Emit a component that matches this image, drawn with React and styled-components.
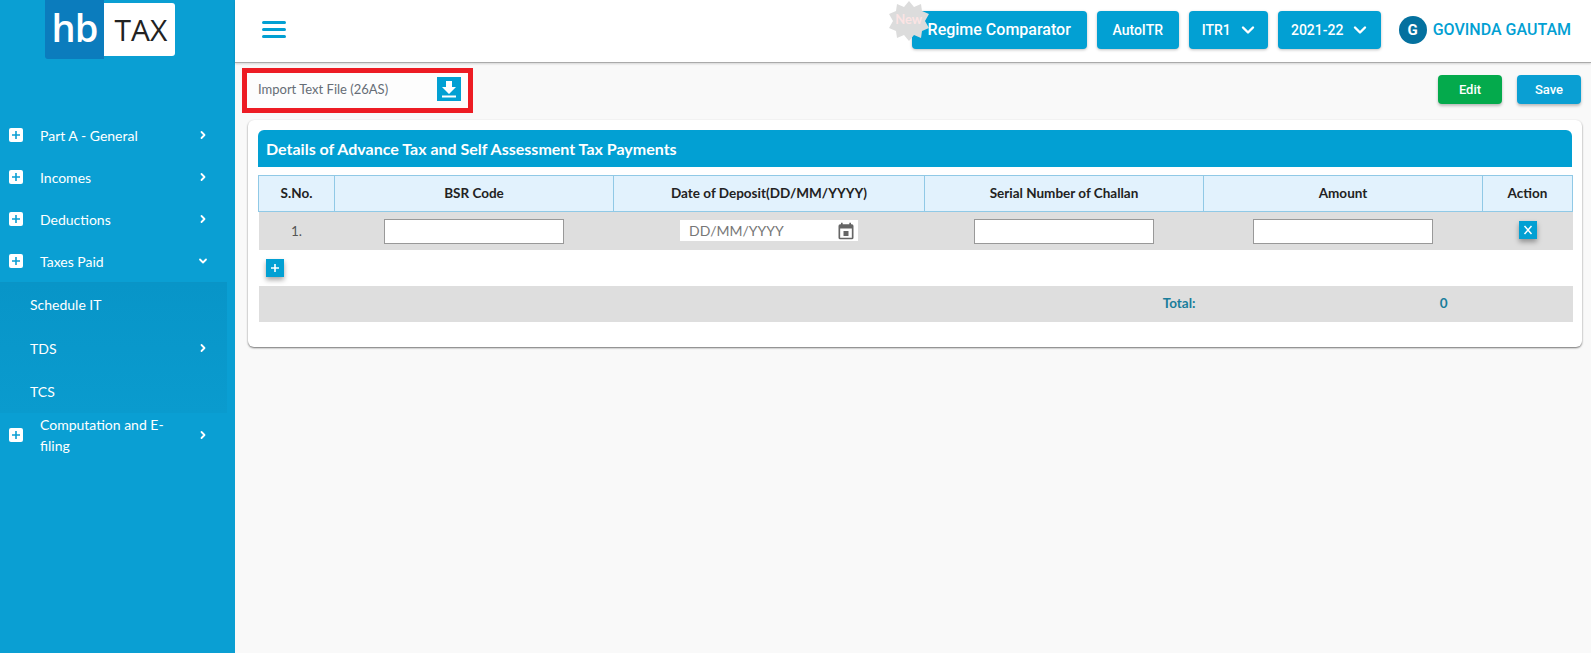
import React from "react";
import styled, { createGlobalStyle } from "styled-components";

const blue = "#02a0d3";

const GlobalStyle = createGlobalStyle`
  html, body {
    margin: 0;
    padding: 0;
    height: 100%;
    overflow: hidden;
    font-family: "Lato", "Liberation Sans", sans-serif;
  }
  * { box-sizing: border-box; }
`;

const Page = styled.div`
  display: flex;
  width: 1591px;
  height: 653px;
  background: #f9f9f9;
`;

const Sidebar = styled.aside`
  width: 235px;
  flex-shrink: 0;
  background: #0a9fd3;
  color: #fff;
`;

const LogoWrap = styled.div`
  display: flex;
  align-items: center;
  height: 114px;
  padding: 0 0 55px 45px;
`;

const LogoMark = styled.div`
  width: 59px;
  height: 59px;
  background: #0b7cbd;
  border-radius: 0 0 0 3px;
  color: #fff;
  font-family: "Open Sans", sans-serif;
  font-size: 38px;
  font-weight: 600;
  line-height: 54px;
  text-align: center;
  letter-spacing: -1px;
`;

const LogoWord = styled.div`
  width: 71px;
  height: 53px;
  padding-left: 3px;
  background: #fff;
  border-radius: 0 3px 3px 0;
  color: #222;
  font-family: "Open Sans", sans-serif;
  font-size: 30px;
  line-height: 53px;
  text-align: center;
`;

const MenuItem = styled.div`
  display: flex;
  align-items: center;
  height: ${(p) => p.$height || 42}px;
  padding: 0 27px 0 9px;
  font-size: 14px;
  line-height: 21px;
  ${(p) => p.$divider && "border-bottom: 1px solid #0a94c6; margin-right: 8px; padding-right: 19px;"}
`;

const PlusBox = styled.span`
  display: flex;
  align-items: center;
  justify-content: center;
  width: 14px;
  height: 14px;
  flex-shrink: 0;
  background: #fff;
  border-radius: 2px;
`;

const MenuLabel = styled.span`
  flex: 1;
  padding-left: 17px;
  padding-right: 20px;
`;

const SubMenu = styled.div`
  width: 227px;
  background: linear-gradient(#0895c8, #0a9bce);
`;

const SubItem = styled.div`
  display: flex;
  align-items: center;
  justify-content: space-between;
  height: 43.4px;
  padding: 0 19px 0 30px;
  font-size: 14px;
`;

const Main = styled.main`
  flex: 1;
  min-width: 0;
`;

const TopBar = styled.header`
  display: flex;
  align-items: center;
  justify-content: space-between;
  height: 63px;
  padding: 0 20px 3px 27px;
  background: #fff;
  border-bottom: 1px solid #aaa;
  box-shadow: 0 1px 2px rgba(0, 0, 0, 0.15);
`;

const Burger = styled.div`
  display: flex;
  flex-direction: column;
  gap: 4px;
  width: 24px;
  span {
    display: block;
    height: 3px;
    border-radius: 2px;
    background: ${blue};
  }
`;

const TopActions = styled.div`
  display: flex;
  align-items: center;
  gap: 10px;
`;

const TopButton = styled.div`
  position: relative;
  display: flex;
  align-items: center;
  justify-content: center;
  gap: 10px;
  width: ${(p) => p.$width}px;
  height: 38px;
  background: ${blue};
  border-radius: 4px;
  color: #fff;
  font-family: "Roboto", sans-serif;
  font-weight: 500;
  font-size: ${(p) => p.$size || 14}px;
  box-shadow: 0 1px 3px rgba(0, 0, 0, 0.25);
`;

const NewBadge = styled.div`
  position: absolute;
  left: -24px;
  top: -11px;
  width: 42px;
  height: 42px;
  svg {
    display: block;
  }
`;

const NewLabel = styled.span`
  position: absolute;
  left: 0;
  right: 0;
  top: 11px;
  color: #fbe4e4;
  font-family: "Lato", sans-serif;
  font-size: 13px;
  font-weight: 700;
  line-height: 16px;
  text-align: center;
`;

const User = styled.div`
  display: flex;
  align-items: center;
  gap: 6px;
  margin-left: 8px;
  color: ${blue};
  font-family: "Roboto", sans-serif;
  font-weight: 500;
  font-size: 16px;
`;

const Avatar = styled.span`
  display: flex;
  align-items: center;
  justify-content: center;
  width: 28px;
  height: 28px;
  border-radius: 50%;
  background: #04719f;
  color: #fff;
  font-weight: 700;
  font-size: 15px;
`;

const Toolbar = styled.div`
  display: flex;
  align-items: flex-start;
  justify-content: space-between;
  height: 57px;
  padding: 5px 10px 0 7px;
`;

const ImportBox = styled.div`
  display: flex;
  align-items: center;
  justify-content: space-between;
  width: 231px;
  height: 45px;
  padding: 0 7px 4px 11px;
  border: 5px solid #ed1c24;
  background: #fdfdfd;
  color: #666d76;
  font-size: 13px;
`;

const IconSquare = styled.span`
  display: flex;
  align-items: center;
  justify-content: center;
  width: 24px;
  height: 24px;
  background: ${blue};
`;

const SaveGroup = styled.div`
  display: flex;
  gap: 15px;
  padding-top: 7px;
`;

const ActionButton = styled.div`
  display: flex;
  align-items: center;
  justify-content: center;
  width: 64px;
  height: 29px;
  border-radius: 4px;
  background: ${(p) => (p.$green ? "#04aa4c" : "#0a9fd3")};
  color: #fff;
  font-family: "Roboto", sans-serif;
  font-weight: 500;
  font-size: 13px;
  box-shadow: 0 2px 3px rgba(0, 0, 0, 0.25);
`;

const Card = styled.section`
  margin: 0 9px 0 13px;
  height: 227px;
  padding: 10px;
  background: #fff;
  border-radius: 6px;
  box-shadow: 0 1px 2px rgba(0, 0, 0, 0.55);
`;

const CardTitle = styled.h2`
  margin: 0 0 8px;
  height: 37px;
  padding-left: 8px;
  background: ${blue};
  border-radius: 6px 6px 0 0;
  color: #fff;
  font-size: 16px;
  font-weight: 700;
  line-height: 37px;
`;

const Table = styled.table`
  width: 1314px;
  table-layout: fixed;
  border-collapse: collapse;
`;

const Th = styled.th`
  height: 36px;
  padding: 0 0 2px;
  background: #e2f2fd;
  border: 1px solid #90c9e6;
  color: #222;
  font-size: 13.5px;
  font-weight: 700;
`;

const Td = styled.td`
  height: ${(p) => p.$height || 38}px;
  padding: 0;
  background: ${(p) => (p.$plain ? "#fff" : "#dedede")};
  color: ${(p) => p.$color || "#555"};
  font-size: 13.5px;
  font-weight: ${(p) => (p.$bold ? 700 : 400)};
  text-align: ${(p) => p.$align || "center"};
  vertical-align: middle;
  ${(p) => p.$right && `padding-right: ${p.$right}px; padding-bottom: 2px;`}
`;

const TextInput = styled.input`
  display: block;
  width: 180px;
  height: 25px;
  margin: 2px auto 0;
  background: #fff;
  border: 1px solid #999;
  border-radius: 0;
`;

const DateField = styled.div`
  display: flex;
  align-items: center;
  justify-content: space-between;
  width: 178px;
  height: 21px;
  margin: 0 auto;
  padding: 0 2px 0 9px;
  background: #fff;
  color: #777;
  font-size: 14px;
`;

const SmallButton = styled.span`
  display: flex;
  align-items: center;
  justify-content: center;
  width: 18px;
  height: 18px;
  margin: ${(p) => p.$margin || "0 auto"};
  background: ${blue};
  color: #fff;
  box-shadow: 0 3px 5px rgba(0, 0, 0, 0.35);
`;

const Chevron = ({ down }) => (
  <svg width="10" height="10" viewBox="0 0 10 10" fill="none" stroke="#fff" strokeWidth="1.8" strokeLinecap="round" strokeLinejoin="round">
    {down ? <path d="M2 3.5 5 6.5 8 3.5" /> : <path d="M3.5 2 6.5 5 3.5 8" />}
  </svg>
);

const BigChevron = () => (
  <svg width="14" height="10" viewBox="0 0 14 10" fill="none" stroke="#fff" strokeWidth="2.4" strokeLinecap="round" strokeLinejoin="round">
    <path d="M2 2.5 7 7.5 12 2.5" />
  </svg>
);

const Plus = ({ color, size = 10 }) => (
  <svg width={size} height={size} viewBox="0 0 10 10" stroke={color} strokeWidth="1.6">
    <path d="M1 5h8M5 1v8" />
  </svg>
);

const Item = ({ label, down, height }) => (
  <MenuItem $height={height} $divider={down}>
    <PlusBox>
      <Plus color="#0a9fd3" />
    </PlusBox>
    <MenuLabel>{label}</MenuLabel>
    <Chevron down={down} />
  </MenuItem>
);

const columns = [76, 279, 311, 279, 279, 90];

export default function App() {
  return (
    <Page>
      <GlobalStyle />
      <Sidebar>
        <LogoWrap>
          <LogoMark>hb</LogoMark>
          <LogoWord>TAX</LogoWord>
        </LogoWrap>
        <Item label="Part A - General" />
        <Item label="Incomes" />
        <Item label="Deductions" />
        <Item label="Taxes Paid" down height={43} />
        <SubMenu>
          <SubItem>Schedule IT</SubItem>
          <SubItem>
            TDS <Chevron />
          </SubItem>
          <SubItem>TCS</SubItem>
        </SubMenu>
        <Item label="Computation and E-filing" height={44} />
      </Sidebar>

      <Main>
        <TopBar>
          <Burger>
            <span />
            <span />
            <span />
          </Burger>
          <TopActions>
            <TopButton $width={175} $size={16}>
              Regime Comparator
              <NewBadge>
                <svg width="42" height="42" viewBox="0 0 42 42">
                  <polygon
                    fill="#dcdcdc"
                    points="21,1 26,7 33,4 34,11 41,14 37,21 41,28 34,31 33,38 26,35 21,41 16,35 9,38 8,31 1,28 5,21 1,14 8,11 9,4 16,7"
                  />
                </svg>
                <NewLabel>New</NewLabel>
              </NewBadge>
            </TopButton>
            <TopButton $width={82}>AutoITR</TopButton>
            <TopButton $width={79}>
              ITR1 <BigChevron />
            </TopButton>
            <TopButton $width={103}>
              2021-22 <BigChevron />
            </TopButton>
            <User>
              <Avatar>G</Avatar>
              GOVINDA GAUTAM
            </User>
          </TopActions>
        </TopBar>

        <Toolbar>
          <ImportBox>
            Import Text File (26AS)
            <IconSquare>
              <svg width="16" height="18" viewBox="0 0 16 18" fill="#fff">
                <path d="M5 1h6v6h4l-7 7-7-7h4z" />
                <rect x="1" y="15.5" width="14" height="2" />
              </svg>
            </IconSquare>
          </ImportBox>
          <SaveGroup>
            <ActionButton $green>Edit</ActionButton>
            <ActionButton>Save</ActionButton>
          </SaveGroup>
        </Toolbar>

        <Card>
          <CardTitle>Details of Advance Tax and Self Assessment Tax Payments</CardTitle>
          <Table>
            <colgroup>
              {columns.map((w, i) => (
                <col key={i} style={{ width: w }} />
              ))}
            </colgroup>
            <thead>
              <tr>
                <Th>S.No.</Th>
                <Th>BSR Code</Th>
                <Th>Date of Deposit(DD/MM/YYYY)</Th>
                <Th>Serial Number of Challan</Th>
                <Th>Amount</Th>
                <Th>Action</Th>
              </tr>
            </thead>
            <tbody>
              <tr>
                <Td>1.</Td>
                <Td>
                  <TextInput />
                </Td>
                <Td>
                  <DateField>
                    DD/MM/YYYY
                    <svg width="20" height="20" viewBox="0 0 24 24" fill="#666">
                      <path d="M19 4h-1V2h-2v2H8V2H6v2H5a2 2 0 0 0-2 2v14a2 2 0 0 0 2 2h14a2 2 0 0 0 2-2V6a2 2 0 0 0-2-2zm0 16H5V9h14v11zM9 12h6v6H9z" />
                    </svg>
                  </DateField>
                </Td>
                <Td>
                  <TextInput />
                </Td>
                <Td>
                  <TextInput />
                </Td>
                <Td>
                  <SmallButton $margin="-2px auto 0">
                    <svg width="10" height="10" viewBox="0 0 10 10" stroke="#fff" strokeWidth="1.5">
                      <path d="M1.5 1l7 8M8.5 1l-7 8" />
                    </svg>
                  </SmallButton>
                </Td>
              </tr>
              <tr>
                <Td colSpan={6} $plain $height={36}>
                  <SmallButton $margin="0 0 0 7px">
                    <Plus color="#fff" />
                  </SmallButton>
                </Td>
              </tr>
              <tr>
                <Td colSpan={4} $height={36} $align="right" $right={8} $bold $color="#1a7d9b">
                  Total:
                </Td>
                <Td $height={36} $align="right" $right={35} $bold $color="#1a7d9b">
                  0
                </Td>
                <Td $height={36} />
              </tr>
            </tbody>
          </Table>
        </Card>
      </Main>
    </Page>
  );
}
